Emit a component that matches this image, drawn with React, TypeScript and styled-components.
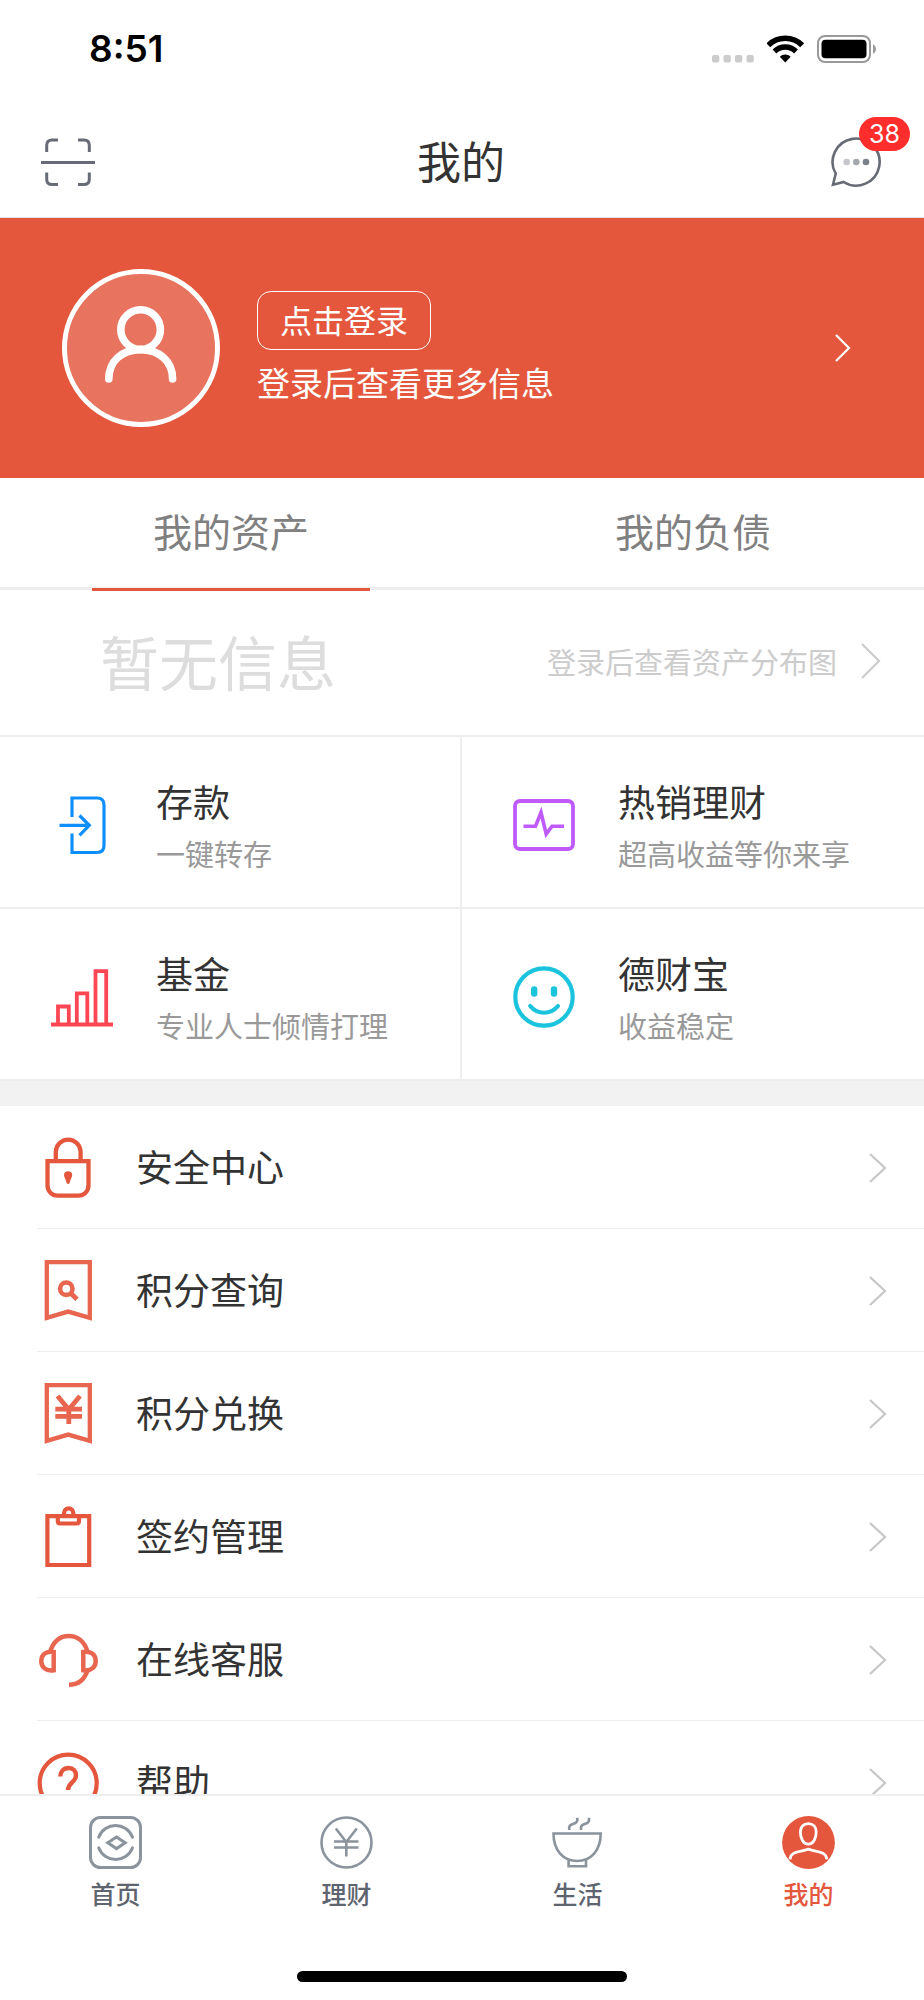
import React from "react";
import styled, { createGlobalStyle } from "styled-components";

const RED = "#e4573d";
const LINE = "#eeeeee";

const GlobalStyle = createGlobalStyle`
  * { box-sizing: border-box; }
  body {
    margin: 0;
    background: #fff;
    color: #333;
    font-family: "Noto Sans CJK SC", sans-serif;
    font-weight: 400;
  }
  button {
    margin: 0;
    padding: 0;
    border: 0;
    background: none;
    color: inherit;
    font: inherit;
    cursor: pointer;
  }
  a { color: inherit; text-decoration: none; }
  h1, h2, p, ul { margin: 0; padding: 0; font-weight: inherit; }
  ul { list-style: none; }
  svg { display: block; flex: none; }
`;

const Screen = styled.div`
  display: flex;
  flex-direction: column;
  height: 100vh;
  background: #fff;
`;

const StatusBar = styled.div`
  display: flex;
  flex: none;
  align-items: center;
  justify-content: space-between;
  height: 98px;
  padding: 0 47px 0 89px;
`;

const Clock = styled.span`
  color: #000;
  font: 600 37px/40px Inter, sans-serif;
`;

const StatusIcons = styled.div`
  display: flex;
  align-items: flex-end;
  gap: 12px;
`;

const Header = styled.header`
  display: grid;
  flex: none;
  grid-template-columns: 1fr auto 1fr;
  align-items: center;
  height: 120px;
  padding: 8px 43px 0 41px;
  border-bottom: 1px solid #dfe1e6;
`;

const Title = styled.h1`
  padding-bottom: 4px;
  font-size: 44px;
  line-height: 60px;
`;

const MessageButton = styled.button`
  position: relative;
  justify-self: end;
`;

const Badge = styled.span`
  position: absolute;
  top: -19px;
  right: -29px;
  height: 34px;
  padding: 0 10px;
  border-radius: 17px;
  background: #ff2d2b;
  color: #fff;
  font: 400 25px/34px Inter, sans-serif;
`;

const Content = styled.main`
  flex: 1;
  min-height: 0;
  overflow-y: auto;
  scrollbar-width: none;
`;

const Hero = styled.section`
  display: flex;
  align-items: center;
  height: 260px;
  padding: 0 73px 0 62px;
  background: ${RED};
  color: #fff;
`;

const HeroText = styled.div`
  display: flex;
  flex: 1;
  flex-direction: column;
  align-items: flex-start;
  gap: 8px;
  margin-left: 37px;
`;

const LoginButton = styled.button`
  height: 59px;
  padding: 0 22px 3px;
  border: 1px solid #fff;
  border-radius: 14px;
  font-size: 32px;
  line-height: 48px;
`;

const HeroNote = styled.p`
  font-size: 33px;
  line-height: 48px;
`;

const Tabs = styled.div`
  display: grid;
  grid-template-columns: 1fr 1fr;
  height: 112px;
  border-bottom: 3px solid ${LINE};
`;

const Tab = styled.button<{ $active?: boolean }>`
  position: relative;
  padding-bottom: 5px;
  color: #808080;
  font-size: 39px;
  line-height: 56px;

  &::after {
    content: "";
    position: absolute;
    bottom: -4px;
    left: 20%;
    width: 60%;
    height: 3px;
    background: ${(p) => (p.$active ? RED : "transparent")};
  }
`;

const Assets = styled.section`
  display: flex;
  align-items: center;
  justify-content: space-between;
  height: 147px;
  padding: 0 43px 3px 100px;
  border-bottom: 2px solid ${LINE};
`;

const EmptyText = styled.p`
  color: #ddd;
  font-size: 59px;
  line-height: 80px;
`;

const AssetLink = styled.a`
  display: flex;
  align-items: center;
  gap: 24px;
  color: #ccc;
  font-size: 29px;
  line-height: 40px;
`;

const Products = styled.section`
  display: grid;
  grid-template-columns: 1fr 1fr;
`;

const Product = styled.a`
  display: flex;
  align-items: center;
  gap: 43px;
  height: 172px;
  padding: 6px 0 0 51px;
  border-bottom: 2px solid ${LINE};

  &:nth-child(odd) { border-right: 2px solid ${LINE}; }
`;

const ProductText = styled.div`
  display: flex;
  flex-direction: column;
  gap: 8px;
`;

const ProductName = styled.h2`
  font-size: 37px;
  line-height: 48px;
`;

const ProductNote = styled.p`
  color: #999;
  font-size: 29px;
  line-height: 40px;
`;

const Divider = styled.div`
  height: 25px;
  background: #f2f2f2;
`;

const Row = styled.li`
  margin-left: 37px;
  border-bottom: 1px solid ${LINE};
`;

const RowLink = styled.a`
  display: flex;
  align-items: center;
  gap: 37px;
  height: 122px;
  padding: 2px 37px 0 0;
  font-size: 37px;
  line-height: 48px;
`;

const RowLabel = styled.span`
  flex: 1;
  padding-bottom: 4px;
`;

const BottomBar = styled.footer`
  display: flex;
  flex: none;
  flex-direction: column;
  align-items: center;
  justify-content: space-between;
  height: 206px;
  padding-bottom: 18px;
  border-top: 2px solid ${LINE};
`;

const BottomNav = styled.nav`
  display: grid;
  grid-template-columns: repeat(4, 1fr);
  width: 100%;
`;

const NavItem = styled.a<{ $active?: boolean }>`
  display: flex;
  flex-direction: column;
  align-items: center;
  gap: 6px;
  padding-top: 20px;
  color: ${(p) => (p.$active ? RED : "#5f6570")};
  font-size: 25px;
  font-weight: 500;
  line-height: 36px;
`;

const HomeIndicator = styled.div`
  width: 330px;
  height: 11px;
  border-radius: 6px;
  background: #000;
`;

type ChevronProps = { width: number; height: number; color: string };

const Chevron = ({ width, height, color }: ChevronProps) => (
  <svg width={width} height={height} fill="none" stroke={color} strokeWidth="2.2" aria-hidden="true">
    <path d={`M1 1L${width - 2} ${height / 2}L1 ${height - 1}`} />
  </svg>
);

const SignalIcon = () => (
  <svg width="43" height="8" fill="#ccc">
    {[0, 11.5, 23, 34.5].map((x) => (
      <rect key={x} x={x} width="7.3" height="7.6" rx="2" />
    ))}
  </svg>
);

const WifiIcon = () => (
  <svg width="38" height="28" fill="none" stroke="#000">
    <path d="M1.3 10.3A24 24 0 0 1 35.2 10.3" strokeWidth="5.6" />
    <path d="M7.5 16.5A15.2 15.2 0 0 1 29 16.5" strokeWidth="5.4" />
    <path d="M18.25 27.4L12.8 21.8A7.8 7.8 0 0 1 23.7 21.8Z" fill="#000" stroke="none" />
  </svg>
);

const BatteryIcon = () => (
  <svg width="60" height="28">
    <rect x="1" y="1" width="52" height="26" rx="7" fill="none" stroke="#999" strokeWidth="2" />
    <rect x="4.5" y="4.8" width="45" height="18.4" rx="4" fill="#000" />
    <path d="M56 9.2a5.4 5.4 0 0 1 0 9.6z" fill="#999" />
  </svg>
);

const ScanIcon = () => (
  <svg width="54" height="48" fill="none" stroke="#666b76" strokeWidth="3">
    <path d="M17 2h-6q-5.3 0-5.3 5.3V14M37 2h6q5.3 0 5.3 5.3V14M5.7 34.5v6.7q0 5.3 5.3 5.3h6M48.3 34.5v6.7q0 5.3-5.3 5.3h-6M0 24.4h54" />
  </svg>
);

const MessageIcon = () => (
  <svg width="51" height="52">
    <path d="M5.7 37.7A23.5 23.5 0 1 1 13.7 46L3 48.7Z" fill="none" stroke="#666b76" strokeWidth="2.6" />
    <circle cx="16.7" cy="26" r="3.3" fill="#c5c7cb" />
    <circle cx="26.3" cy="26" r="3.3" fill="#a3a7ae" />
    <circle cx="36" cy="26" r="3.3" fill="#7b818b" />
  </svg>
);

const AvatarIcon = () => (
  <svg width="158" height="158" fill="none" stroke="#fff">
    <circle cx="79" cy="79" r="76.5" fill="#e8735e" strokeWidth="5" />
    <circle cx="78.6" cy="60.6" r="19.8" strokeWidth="7.6" />
    <path d="M46.8 110C46.8 92 60 80.6 78.6 80.6S110.6 92 110.6 110" strokeWidth="7.6" strokeLinecap="round" />
  </svg>
);

const DepositIcon = () => (
  <svg width="62" height="62" fill="none" stroke="#0f8fff" strokeWidth="3.2">
    <path d="M21 23V4H46q7 0 7 7V51.5q0 7-7 7H21V39.5M8.5 31.3H38M28.5 21.5L38.3 31.3L28.5 41.3" />
  </svg>
);

const PulseIcon = () => (
  <svg width="62" height="62" fill="none" stroke="#bf5aff" strokeWidth="3.8">
    <rect x="2" y="7" width="58" height="48" rx="5" />
    <path d="M10.5 32.2H22.5L28 18.5L33.2 40L39 32.2H51" strokeWidth="3.6" />
  </svg>
);

const FundIcon = () => (
  <svg width="62" height="62" fill="none" stroke="#ff4655" strokeWidth="3.8">
    <path d="M0 58.5H62M7 58V40.5H17.8V58M25.8 58V27.3H36.3V58M44.5 58V5.2H55.2V58" />
  </svg>
);

const SmileIcon = () => (
  <svg width="62" height="62" fill="none" stroke="#1bc4dd" strokeWidth="4.2" strokeLinecap="round">
    <circle cx="31" cy="31" r="28.7" />
    <path d="M21.2 23.5v4M41 23.5v4" strokeWidth="6.4" />
    <path d="M17.2 40C24.5 49 37.5 49 45 40" />
  </svg>
);

const LockIcon = () => (
  <svg width="62" height="62" fill="none" stroke={RED} strokeWidth="4.3">
    <path d="M10.5 24.2H51.5V48.6a10 10 0 0 1-10 10H20.5a10 10 0 0 1-10-10ZM18.8 24V15a12.4 12.4 0 0 1 24.8 0V24" />
    <path d="M27 38.3a4.1 4.1 0 0 1 8.2 0c0 2.2-1.9 4-2.6 7.7q-1.5 2-3 0c-.7-3.7-2.6-5.5-2.6-7.7z" fill={RED} stroke="none" />
  </svg>
);

const PointsSearchIcon = () => (
  <svg width="62" height="62" fill="none" stroke="#e8664f" strokeWidth="4.3">
    <path d="M9.8 2.2H52.8V57.8L31.2 51.6L9.8 57.8Z" />
    <circle cx="29.3" cy="28.7" r="6.2" strokeWidth="4.6" />
    <path d="M33.5 33L40 39.2" strokeWidth="4.8" />
  </svg>
);

const PointsExchangeIcon = () => (
  <svg width="62" height="62" fill="none" stroke="#e8664f" strokeWidth="4.3">
    <path d="M9.8 2.2H52.8V57.8L31.2 51.6L9.8 57.8Z" />
    <path d="M20.5 13L31.8 26.5L43 13M18.3 26.2H45M18.3 33.3H45M31.8 26V41" strokeWidth="4.8" />
  </svg>
);

const ContractIcon = () => (
  <svg width="62" height="62" fill="none" stroke={RED} strokeWidth="4.2">
    <path d="M10.4 10.2H52.2V59H10.4ZM20.8 10V15q0 2.5 2.5 2.5H39.5q2.5 0 2.5-2.5V10M27.1 10V7a4.6 4.6 0 0 1 9.2 0V10" />
  </svg>
);

const ServiceIcon = () => (
  <svg width="62" height="62" fill="none" stroke="#e8664f" strokeWidth="4.5">
    <path d="M13.3 22C17 11.5 24 7 31.8 7S47 11.5 50.3 22" />
    <path d="M16.7 23C8 21.5 4.3 26.5 4.3 32S8 42.5 16.7 41.2ZM46.3 23C55 21.5 58.7 26.5 58.7 32S55 42.5 46.3 41.2Z" />
    <path d="M50.3 42C47.5 50 41.5 55.8 32 55.8" />
  </svg>
);

const HelpIcon = () => (
  <svg width="62" height="62" fill="none" stroke={RED} strokeWidth="4.2">
    <circle cx="31.2" cy="31.2" r="28.5" />
    <path d="M23.3 24.5c.2-5.3 3.4-8.5 8.2-8.5s7.5 3.2 7.5 7.5c0 6.8-8 7-8 14.5M31 42v5" strokeWidth="4.4" />
  </svg>
);

const HomeIcon = () => (
  <svg width="53" height="53" fill="none" stroke="#8b939c" strokeWidth="3">
    <rect x="1.5" y="1.5" width="50" height="50" rx="10" />
    <path d="M9.7 21.2C15.5 5.7 37.7 5.7 43.5 21.2M9.7 31.8C15.5 47.3 37.7 47.3 43.5 31.8" strokeLinecap="round" />
    <path d="M18.8 26.8L27.5 21L36.2 26.8L27.5 32.6Z" />
  </svg>
);

const WealthIcon = () => (
  <svg width="53" height="53" fill="none" stroke="#8b939c" strokeWidth="2.6">
    <circle cx="26.5" cy="26.5" r="25" />
    <path d="M15.8 12.5L26.3 26L36.8 12.5M14 25.5H38.5M14 31.5H38.5M26.3 26V40.5" />
  </svg>
);

const LifeIcon = () => (
  <svg width="53" height="53" fill="none" stroke="#8b939c" strokeWidth="2.6">
    <path d="M2.5 17.5H49.7C49.7 34.5 40 45 26.1 45S2.5 34.5 2.5 17.5ZM17.6 43.5V50.3H35V43.5" />
    <path d="M18.2 14V11.5Q18.2 9 22 8T26.3 4.5V1.7M30 14V11.5Q30 9 33.8 8T38 4.5V1.7" />
  </svg>
);

const MineIcon = () => (
  <svg width="53" height="53" fill="none" stroke="#fff" strokeWidth="2.8">
    <circle cx="26.5" cy="26.5" r="26.4" fill={RED} stroke="none" />
    <path d="M26.3 7.6C31.3 7.6 34.2 11.2 34.2 16C34.2 22.5 31.3 28.2 26.3 28.2S18.4 22.5 18.4 16C18.4 11.2 21.3 7.6 26.3 7.6ZM8 43.3C8.5 35.5 16.5 36.5 26.3 33.2C36 36.5 44.2 35.5 44.8 43.3" />
  </svg>
);

const products = [
  { name: "存款", note: "一键转存", Icon: DepositIcon },
  { name: "热销理财", note: "超高收益等你来享", Icon: PulseIcon },
  { name: "基金", note: "专业人士倾情打理", Icon: FundIcon },
  { name: "德财宝", note: "收益稳定", Icon: SmileIcon },
];

const services = [
  { label: "安全中心", Icon: LockIcon },
  { label: "积分查询", Icon: PointsSearchIcon },
  { label: "积分兑换", Icon: PointsExchangeIcon },
  { label: "签约管理", Icon: ContractIcon },
  { label: "在线客服", Icon: ServiceIcon },
  { label: "帮助", Icon: HelpIcon },
];

const navItems = [
  { label: "首页", Icon: HomeIcon },
  { label: "理财", Icon: WealthIcon },
  { label: "生活", Icon: LifeIcon },
  { label: "我的", Icon: MineIcon, active: true },
];

export default function App() {
  return (
    <Screen>
      <GlobalStyle />
      <StatusBar>
        <Clock>8:51</Clock>
        <StatusIcons>
          <SignalIcon />
          <WifiIcon />
          <BatteryIcon />
        </StatusIcons>
      </StatusBar>

      <Header>
        <button type="button" aria-label="扫一扫">
          <ScanIcon />
        </button>
        <Title>我的</Title>
        <MessageButton type="button" aria-label="消息">
          <MessageIcon />
          <Badge>38</Badge>
        </MessageButton>
      </Header>

      <Content>
        <Hero>
          <AvatarIcon />
          <HeroText>
            <LoginButton type="button">点击登录</LoginButton>
            <HeroNote>登录后查看更多信息</HeroNote>
          </HeroText>
          <Chevron width={16} height={28} color="#fff" />
        </Hero>

        <Tabs role="tablist">
          <Tab type="button" role="tab" aria-selected="true" $active>
            我的资产
          </Tab>
          <Tab type="button" role="tab" aria-selected="false">
            我的负债
          </Tab>
        </Tabs>

        <Assets>
          <EmptyText>暂无信息</EmptyText>
          <AssetLink href="#assets">
            登录后查看资产分布图
            <Chevron width={20} height={36} color="#ccc" />
          </AssetLink>
        </Assets>

        <Products>
          {products.map(({ name, note, Icon }) => (
            <Product key={name} href="#product">
              <Icon />
              <ProductText>
                <ProductName>{name}</ProductName>
                <ProductNote>{note}</ProductNote>
              </ProductText>
            </Product>
          ))}
        </Products>

        <Divider />

        <ul>
          {services.map(({ label, Icon }) => (
            <Row key={label}>
              <RowLink href="#service">
                <Icon />
                <RowLabel>{label}</RowLabel>
                <Chevron width={18} height={30} color="#c7c7c7" />
              </RowLink>
            </Row>
          ))}
        </ul>
      </Content>

      <BottomBar>
        <BottomNav>
          {navItems.map(({ label, Icon, active }) => (
            <NavItem key={label} href="#nav" $active={active}>
              <Icon />
              {label}
            </NavItem>
          ))}
        </BottomNav>
        <HomeIndicator />
      </BottomBar>
    </Screen>
  );
}
